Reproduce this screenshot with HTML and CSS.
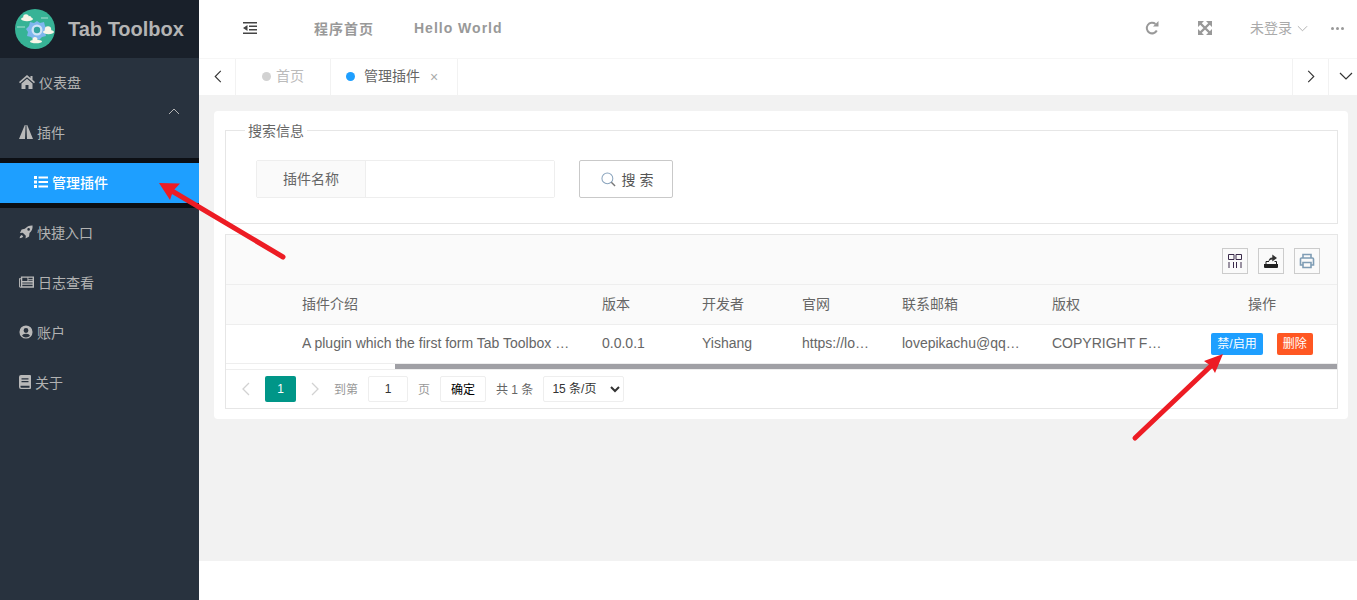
FILE: index.html
```html
<!DOCTYPE html>
<html lang="en">
<head>
    <meta charset="UTF-8">
    <meta name="viewport" content="width=device-width, initial-scale=1.0">
    <title>Tab Toolbox</title>
    <link rel="stylesheet" href="styles.css">
</head>
<body>
    <div class="app">
        <aside class="side">
            <div class="logo">
                <svg class="logo-img" viewBox="0 0 40 40">
                    <circle cx="20" cy="20" r="20" fill="#37b396"/>
                    <path d="M22 12l3 2 4-1 1 4 2 3-2 3 1 4-4 1-3 3-2-1-3 1-3-3-4-1 1-4-2-3 3-3 1-4 4 1z" fill="#7fb6ee"/>
                    <circle cx="22" cy="21" r="5.500" fill="#cfe3f7"/>
                    <circle cx="22" cy="21" r="3.200" fill="#34a5a0"/>
                    <g fill="#f8f5e8">
                        <ellipse cx="12" cy="10" rx="6" ry="2.200"/><circle cx="11" cy="8" r="2.800"/><circle cx="14.500" cy="8.800" r="1.800"/>
                        <ellipse cx="33.500" cy="23" rx="5.500" ry="2.200"/><circle cx="33" cy="20.500" r="3.200"/>
                        <ellipse cx="21" cy="32.500" rx="6" ry="1.800"/><circle cx="20" cy="30.500" r="2.500"/>
                    </g>
                    <path d="M2 18h8M26 9h7" stroke="#dff3ee" stroke-width=".7"/>
                </svg>
                <span class="logo-text">Tab Toolbox</span>
            </div>
            <ul class="nav">
                <li class="nav-item">
                    <svg class="ico ico-home" viewBox="0 0 16 14"><path d="M8 0L0 7l1 1.200L8 2.200l7 6L16 7l-2.500-2.200V1h-2v2zM2.500 8.500V14h4v-4h3v4h4V8.500L8 3.800z"/></svg>
                    仪表盘
                </li>
                <li class="nav-item nav-open">
                    <svg class="ico" viewBox="0 0 14 14"><path d="M5.800 0h.8L6 14H0zM7.400 0h.8L14 14H8z"/></svg>
                    插件
                    <svg class="caret" viewBox="0 0 12 7"><path d="M1 6l5-5 5 5" fill="none" stroke="#b5b5b5"/></svg>
                </li>
                <li class="nav-group">
                    <div class="nav-sub">
                        <svg class="ico" viewBox="0 0 14 12"><path d="M0 0h3v3H0zM0 4.500h3v3H0zM0 9h3v3H0zM4.500.5H14v2H4.500zM4.500 5H14v2H4.500zM4.500 9.500H14v2H4.500z"/></svg>
                        管理插件
                    </div>
                </li>
                <li class="nav-item">
                    <svg class="ico" viewBox="0 0 16 16"><path d="M15.500.5c.3 3.500-.8 6.300-3.500 8.500l-.5 4-4 2.500.3-3.200-3.500-3.500-3.200.4L3 5l3.700-.6C9 1.600 12 .3 15.500.5zM11 3.500a1.500 1.500 0 100 3 1.500 1.500 0 000-3zM3.300 11.500l1.500 1.500C3.800 14.300 2.500 14.800.8 15c.2-1.600.8-2.800 2.500-3.500z"/></svg>
                    快捷入口
                </li>
                <li class="nav-item">
                    <svg class="ico ico-news" viewBox="0 0 16 14"><path fill-rule="evenodd" d="M2 1h14v12H1.500A1.500 1.500 0 010 11.500V3h2zM1 4v7.500a.5.500 0 001 0V4zm2.500-1.500V6H9V2.500zm6.500 0V4h4.500V2.500zM10 5v1h4.500V5zM3.500 7.500v1h11v-1zm0 2.500v1.500h11V10z"/></svg>
                    日志查看
                </li>
                <li class="nav-item">
                    <svg class="ico" viewBox="0 0 16 16"><path fill-rule="evenodd" d="M8 .5a7.500 7.500 0 110 15 7.500 7.500 0 010-15zM8 3.500A2.700 2.700 0 108 9a2.700 2.700 0 000-5.500zM3.500 12.300A5.800 5.800 0 008 14.300c1.800 0 3.400-.8 4.500-2C12 10.800 10.500 10 8 10s-4 .8-4.500 2.300z"/></svg>
                    账户
                </li>
                <li class="nav-item">
                    <svg class="ico ico-book" viewBox="0 0 12 14"><path fill-rule="evenodd" d="M2 0h9a1 1 0 011 1v12a1 1 0 01-1 1H2a2 2 0 01-2-2V2a2 2 0 012-2zM2.500 3.200v1.300h7V3.200zm0 2.800v1.300h7V6zM1.500 10.800v1.100a.8.800 0 00.8.8h8.200v-1.900z"/></svg>
                    关于
                </li>
            </ul>
        </aside>

        <div class="main">
            <header class="top">
                <div class="top-left">
                    <svg class="top-fold" viewBox="0 0 14 12"><path d="M0 0h14v1.600H0zM6 3.400h8V5H6zM6 7h8v1.600H6zM0 10.400h14V12H0zM4.500 3L0 6l4.500 3z"/></svg>
                    <a class="top-link">程序首页</a>
                    <a class="top-link">Hello World</a>
                </div>
                <div class="top-right">
                    <svg class="top-ico" viewBox="0 0 14 14"><path d="M11.800 9.500A5.300 5.300 0 1110.500 3" fill="none" stroke="#999" stroke-width="2"/><path d="M8 5.500h5.500V0z" fill="#999"/></svg>
                    <svg class="top-ico top-ico-wide" viewBox="0 0 14 14"><path d="M0 0h6L0 6zM14 0v6L8 0zM14 14H8l6-6zM0 14V8l6 6z" fill="#999"/><path d="M2 2l10 10M12 2L2 12" stroke="#999" stroke-width="2.400"/></svg>
                    <span class="top-user"><span class="top-name">未登录</span>
                        <svg class="top-caret" viewBox="0 0 12 7"><path d="M1 1l5 5 5-5" fill="none" stroke="#aaa"/></svg>
                    </span>
                    <span class="top-more"><i></i><i></i><i></i></span>
                </div>
            </header>

            <nav class="tabs">
                <div class="tab-btn tab-prev"><svg viewBox="0 0 8 14"><path d="M7 1L1 7l6 6" fill="none" stroke="#333" stroke-width="1.200"/></svg></div>
                <div class="tab"><i class="dot"></i>首页</div>
                <div class="tab tab-on"><i class="dot"></i>管理插件<span class="tab-x">×</span></div>
                <div class="tab-fill"></div>
                <div class="tab-btn tab-next"><svg viewBox="0 0 8 14"><path d="M1 1l6 6-6 6" fill="none" stroke="#333" stroke-width="1.200"/></svg></div>
                <div class="tab-btn tab-down"><svg viewBox="0 0 14 8"><path d="M1 1l6 6 6-6" fill="none" stroke="#333" stroke-width="1.200"/></svg></div>
            </nav>

            <section class="content">
                <div class="card">
                    <fieldset class="search">
                        <legend>搜索信息</legend>
                        <div class="search-row">
                            <div class="field">
                                <label class="field-label">插件名称</label>
                                <input class="field-input" type="text">
                            </div>
                            <button class="search-btn">
                                <svg viewBox="0 0 16 16"><circle cx="6.800" cy="6.800" r="5.800" fill="none" stroke="#8aa4bd" stroke-width="1.100"/><path d="M11 11l4 4" stroke="#777" stroke-width="1.500"/></svg>
                                搜 索
                            </button>
                        </div>
                    </fieldset>

                    <div class="grid-box">
                        <div class="toolbar">
                            <span class="tool"><svg viewBox="0 0 14 14"><path d="M.5.500h5.500v5H.5zM8 .5h5.500v5H8zM1 8v6M5.500 8v6M8.500 8v6M13 8v6" fill="none" stroke="#3a2a4a"/></svg></span>
                            <span class="tool"><svg viewBox="0 0 14 14"><path d="M0 10h14v3a1 1 0 01-1 1H1a1 1 0 01-1-1z" fill="#222"/><path d="M2 10.500V7.500h3M12.500 10.500V7.500h-2" fill="none" stroke="#222"/><path d="M4.500 8c0-3 1.800-4.500 3.800-4.500V.5L13 4 8.300 7.500V5.500C6.500 5.500 5.500 6.500 4.500 8z" fill="#333"/></svg></span>
                            <span class="tool"><svg class="tool-print" viewBox="0 0 16 16"><path d="M4 5V1.500h8V5M4 12H1.500V6a1 1 0 011-1h11a1 1 0 011 1v6H12" fill="none" stroke="#7f9db5" stroke-width="1.600"/><path d="M4 9.500h8v5H4z" fill="none" stroke="#7f9db5" stroke-width="1.600"/></svg></span>
                        </div>
                        <table class="grid">
                            <colgroup>
                                <col class="c-blank"><col class="c-intro"><col class="c-small"><col class="c-small"><col class="c-small"><col class="c-mail"><col class="c-copy"><col class="c-ops">
                            </colgroup>
                            <thead>
                                <tr>
                                    <th></th><th>插件介绍</th><th>版本</th><th>开发者</th><th>官网</th><th>联系邮箱</th><th>版权</th><th class="center">操作</th>
                                </tr>
                            </thead>
                            <tbody>
                                <tr>
                                    <td></td>
                                    <td><div class="cut">A plugin which the first form Tab Toolbox is a tool</div></td>
                                    <td><div class="cut">0.0.0.1</div></td>
                                    <td><div class="cut">Yishang</div></td>
                                    <td><div class="cut">https://lovepikachu.top</div></td>
                                    <td><div class="cut">lovepikachu@qq.com</div></td>
                                    <td class="copy"><div class="cut">COPYRIGHT FREE LICENSE</div></td>
                                    <td class="center ops">
                                        <span class="mini mini-blue">禁/启用</span><span class="mini mini-red">删除</span>
                                    </td>
                                </tr>
                            </tbody>
                        </table>
                        <div class="hbar"><div class="hbar-thumb"></div></div>
                        <div class="pager">
                            <svg class="pg-arrow" viewBox="0 0 8 14"><path d="M7 1L1 7l6 6" fill="none" stroke="#d2d2d2" stroke-width="1.300"/></svg>
                            <span class="pg-cur">1</span>
                            <svg class="pg-arrow" viewBox="0 0 8 14"><path d="M1 1l6 6-6 6" fill="none" stroke="#d2d2d2" stroke-width="1.300"/></svg>
                            <span class="pg-txt pg-to">到第</span>
                            <input class="pg-input" type="text" value="1">
                            <span class="pg-txt">页</span>
                            <button class="pg-ok">确定</button>
                            <span class="pg-total">共 1 条</span>
                            <select class="pg-size"><option>15 条/页</option></select>
                        </div>
                    </div>
                </div>
            </section>
            <div class="foot"></div>
        </div>
    </div>

    <svg class="marks" viewBox="0 0 1357 600">
        <path d="M283 257L172 191" stroke="#ed1c24" stroke-width="5" stroke-linecap="round"/>
        <path d="M159 183L180 183.500 173 191 170 200z" fill="#ed1c24"/>
        <path d="M1135 438L1213 364" stroke="#ed1c24" stroke-width="5" stroke-linecap="round"/>
        <path d="M1223 354L1204 361 1211 366 1215 373z" fill="#ed1c24"/>
    </svg>
</body>
</html>
```

FILE: styles.css
```css
* {
    box-sizing: border-box;
}

body {
    margin: 0;
    height: 600px;
    overflow: hidden;
    font-family: "Liberation Sans", "Noto Sans CJK SC", sans-serif;
    font-size: 14px;
    color: #666;
    background: #fff;
}

.app {
    display: flex;
    height: 600px;
}

/* sidebar */
.side {
    width: 199px;
    flex: none;
    background: #28323e;
}

.logo {
    display: flex;
    align-items: center;
    height: 58px;
    padding-left: 15px;
    background: #19202a;
}

.logo-img {
    width: 40px;
    height: 40px;
    margin-right: 13px;
}

.logo-text {
    font-size: 20px;
    font-weight: bold;
    color: #b4b4b4;
}

.nav {
    list-style: none;
    margin: 0;
    padding: 0;
}

.nav-item {
    position: relative;
    display: flex;
    align-items: center;
    height: 50px;
    padding: 0 0 2px 19px;
    color: #b2b2b2;
}

.ico {
    flex: none;
    width: 14px;
    height: 14px;
    margin-right: 4px;
    fill: #b9b9b9;
}

.ico-home {
    width: 16px;
}

.ico-news {
    width: 15px;
}

.ico-book {
    width: 12px;
}

.caret {
    position: absolute;
    top: 0;
    left: 168px;
    width: 12px;
    height: 7px;
}

.nav-group {
    height: 50px;
    padding: 5px 0;
    background: #0c0f14;
}

.nav-sub {
    display: flex;
    align-items: center;
    height: 40px;
    padding: 0 0 2px 34px;
    font-weight: 500;
    color: #fff;
    background: #1e9fff;
}

.nav-sub .ico {
    height: 12px;
    fill: #fff;
}

/* header */
.main {
    flex: 1;
    display: flex;
    flex-direction: column;
    min-width: 0;
}

.top {
    display: flex;
    align-items: center;
    justify-content: space-between;
    flex: none;
    height: 59px;
    padding-bottom: 2px;
    border-bottom: 1px solid #f6f6f6;
}

.top-left {
    display: flex;
    align-items: center;
}

.top-fold {
    width: 14px;
    height: 12px;
    margin-left: 44px;
    margin-right: 57px;
    fill: #444;
}

.top-link {
    margin-right: 40px;
    font-weight: bold;
    letter-spacing: 1px;
    color: #999;
}

.top-right {
    display: flex;
    align-items: center;
    padding-right: 13px;
}

.top-ico {
    width: 14px;
    height: 14px;
    margin-right: 39px;
}

.top-ico-wide {
    margin-right: 38px;
}

.top-user {
    display: flex;
    align-items: center;
    color: #aaa;
}

.top-name {
    padding-bottom: 2px;
}

.top-caret {
    width: 11px;
    height: 7px;
    margin-left: 5px;
}

.top-more {
    display: flex;
    gap: 2px;
    margin-left: 23px;
}

.top-more i {
    width: 3px;
    height: 3px;
    border-radius: 50%;
    background: #999;
}

/* tabs */
.tabs {
    display: flex;
    flex: none;
    height: 36px;
    background: #fff;
}

.tab-btn {
    display: flex;
    align-items: center;
    justify-content: center;
    padding-bottom: 2px;
    border-left: 1px solid #f2f2f2;
}

.tab-btn svg {
    width: 8px;
    height: 13px;
}

.tab-prev {
    width: 37px;
    padding-left: 1px;
    border-left: none;
    border-right: 1px solid #f2f2f2;
}

.tab-next {
    width: 36px;
}

.tab-down {
    width: 29px;
    padding-left: 6px;
}

.tab-down svg {
    width: 14px;
    height: 8px;
}

.tab {
    display: flex;
    align-items: center;
    padding: 0 0 4px 26px;
    width: 95px;
    border-right: 1px solid #f2f2f2;
    color: #bbb;
}

.tab-on {
    width: 127px;
    padding-left: 15px;
    color: #666;
}

.dot {
    width: 9px;
    height: 9px;
    margin: 2px 5px 0 0;
    border-radius: 50%;
    background: #d2d2d2;
}

.tab-on .dot {
    margin-right: 9px;
    background: #1e9fff;
}

.tab-x {
    margin: 4px 0 0 10px;
    font-size: 14px;
    color: #aaa;
}

.tab-fill {
    flex: 1;
}

/* content */
.content {
    flex: 1;
    padding: 16px 9px 0 15px;
    background: #f2f2f2;
}

.card {
    height: 308px;
    padding: 10px 10px 0 11px;
    border-radius: 4px;
    background: #fff;
}

.search {
    height: 103px;
    margin: 0;
    padding: 20px 0 0 30px;
    border: 1px solid #e6e6e6;
}

.search legend {
    margin-left: -11px;
    padding: 1px 3px 0;
    line-height: 18px;
    color: #666;
}

.search-row {
    display: flex;
}

.field {
    display: flex;
    width: 299px;
    height: 38px;
    border: 1px solid #eee;
    border-radius: 2px;
}

.field-label {
    width: 109px;
    line-height: 36px;
    text-align: center;
    background: #fafafa;
    border-right: 1px solid #eee;
}

.field-input {
    flex: 1;
    min-width: 0;
    border: none;
    outline: none;
}

.search-btn {
    display: flex;
    align-items: center;
    justify-content: center;
    width: 94px;
    height: 38px;
    margin-left: 24px;
    padding: 0 0 0 2px;
    border: 1px solid #c9c9c9;
    border-radius: 2px;
    background: #fff;
    font: inherit;
    color: #555;
}

.search-btn svg {
    width: 15px;
    height: 15px;
    margin-right: 6px;
}

.grid-box {
    margin-top: 10px;
    height: 175px;
    border: 1px solid #e6e6e6;
}

.toolbar {
    display: flex;
    justify-content: flex-end;
    gap: 10px;
    height: 50px;
    padding: 13px 17px 0 0;
    background: #fafafa;
    border-bottom: 1px solid #eee;
}

.tool {
    display: flex;
    align-items: center;
    justify-content: center;
    width: 26px;
    height: 26px;
    border: 1px solid #ccc;
}

.tool svg {
    width: 14px;
    height: 14px;
}

.tool .tool-print {
    width: 16px;
    height: 16px;
}

.grid {
    width: 1111px;
    table-layout: fixed;
    border-collapse: collapse;
}

.c-blank { width: 66px; }
.c-intro { width: 300px; }
.c-small { width: 100px; }
.c-mail { width: 150px; }
.c-copy { width: 145px; }
.c-ops { width: 150px; }

.grid th,
.grid td {
    height: 39px;
    padding: 0 20px 2px 10px;
    font-weight: normal;
    text-align: left;
    border-bottom: 1px solid #eee;
}

.grid th {
    background: #fafafa;
}

.grid .center {
    padding-left: 10px;
    padding-right: 10px;
    text-align: center;
}

.grid .ops {
    padding-bottom: 0;
}

.grid .copy {
    padding-right: 25px;
}

.cut {
    overflow: hidden;
    white-space: nowrap;
    text-overflow: ellipsis;
}

.mini {
    display: inline-block;
    height: 22px;
    padding: 0 6px;
    line-height: 23px;
    font-size: 12px;
    color: #fff;
    border-radius: 2px;
}

.mini-blue {
    background: #1e9fff;
}

.mini-red {
    margin-left: 14px;
    background: #ff5722;
}

.hbar {
    height: 5px;
    padding-left: 169px;
}

.hbar-thumb {
    height: 5px;
    background: #a0a0a5;
}

.pager {
    display: flex;
    align-items: center;
    height: 40px;
    padding-left: 16px;
    border-top: 1px solid #eee;
    font-size: 12px;
}

.pg-arrow {
    width: 8px;
    height: 14px;
}

.pg-cur {
    width: 31px;
    height: 26px;
    margin: 0 15px 0 15px;
    line-height: 26px;
    text-align: center;
    color: #fff;
    background: #009688;
    border-radius: 2px;
}

.pg-txt {
    padding-bottom: 2px;
    color: #999;
}

.pg-to {
    margin-left: 15px;
}

.pg-input {
    width: 40px;
    height: 26px;
    margin: 0 10px;
    padding: 0;
    border: 1px solid #eee;
    border-radius: 2px;
    text-align: center;
    font: inherit;
    color: #333;
}

.pg-ok {
    width: 46px;
    height: 26px;
    margin-left: 10px;
    padding: 0 0 2px;
    border: 1px solid #eee;
    border-radius: 2px;
    background: #fff;
    font: inherit;
    color: #000;
}

.pg-total {
    margin-left: 10px;
    padding-bottom: 2px;
    color: #666;
}

.pg-size {
    width: 81px;
    height: 26px;
    margin-left: 10px;
    padding-left: 4px;
    border: 1px solid #eee;
    border-radius: 2px;
    background: #fff;
    font: inherit;
    color: #333;
}

.foot {
    flex: none;
    height: 39px;
    background: #fff;
}

/* arrows drawn on top of the screenshot */
.marks {
    position: absolute;
    top: 0;
    left: 0;
    width: 1357px;
    height: 600px;
    pointer-events: none;
}
```
